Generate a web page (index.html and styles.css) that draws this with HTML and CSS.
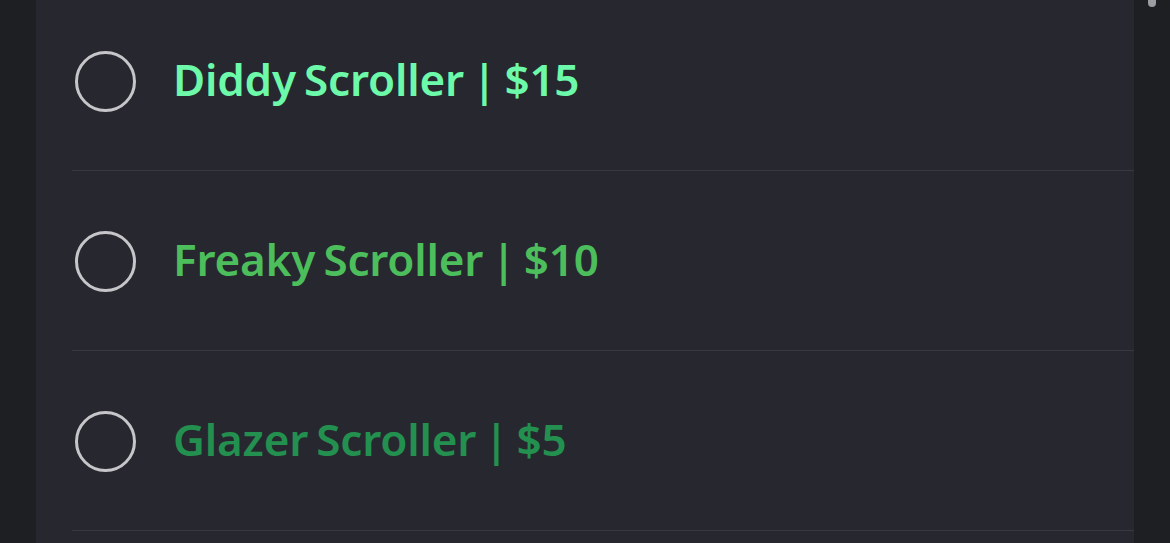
FILE: index.html
```html
<!DOCTYPE html>
<html>
<head>
<meta charset="utf-8">
<link rel="stylesheet" href="styles.css">
</head>
<body>
<div class="app">
  <div class="side"></div>
  <div class="panel">
    <ul class="options">
      <li class="option"><span class="radio"></span><span class="label mint">Diddy Scroller | $15</span></li>
      <li class="option"><span class="radio"></span><span class="label green">Freaky Scroller | $10</span></li>
      <li class="option"><span class="radio"></span><span class="label dark">Glazer Scroller | $5</span></li>
    </ul>
  </div>
  <div class="rail"><div class="thumb"></div></div>
</div>
</body>
</html>
```
FILE: styles.css
```css
html, body {
  margin: 0;
  padding: 0;
  height: 100%;
  background: #1e1f22;
  overflow: hidden;
}
.app {
  display: flex;
  height: 543px;
  font-family: "Noto Sans", "Open Sans", sans-serif;
}
.side {
  width: 36px;
  flex: none;
  background: #1e1f22;
}
.panel {
  flex: 1;
  background: #27282f;
  overflow: hidden;
}
.options {
  list-style: none;
  margin: -9px 0 0 36px;
  padding: 0;
}
.option {
  height: 179px;
  border-bottom: 1px solid #383942;
  display: flex;
  align-items: center;
  padding-left: 3px;
}
.radio {
  width: 55px;
  height: 55px;
  border: 3px solid #c6c6ca;
  border-radius: 50%;
  flex: none;
  margin-top: 1px;
}
.label {
  margin-left: 37px;
  font-size: 44px;
  font-weight: 600;
  letter-spacing: -0.2px;
  word-spacing: -3px;
  margin-top: -3px;
}
.mint { color: #6cf9a9; }
.green { color: #4cbe5b; }
.dark { color: #23904f; }
.rail {
  width: 36px;
  flex: none;
  background: #1e1f22;
  display: flex;
  justify-content: center;
}
.thumb {
  width: 8px;
  height: 14px;
  margin-top: -7px;
  border-radius: 4px;
  background: #9c9ca3;
}
```
